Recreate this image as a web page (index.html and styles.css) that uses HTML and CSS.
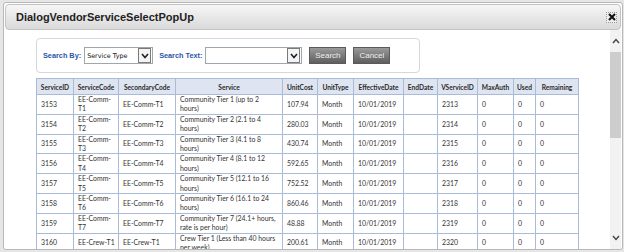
FILE: index.html
```html
<!DOCTYPE html>
<html lang="en">
<head>
    <meta charset="UTF-8">
    <title>DialogVendorServiceSelectPopUp</title>
    <link rel="stylesheet" href="styles.css">
</head>
<body>
    <div class="dialog">
        <div class="titlebar">
            <span class="title">DialogVendorServiceSelectPopUp</span>
            <span class="close">
                <svg width="8" height="8" viewBox="0 0 8 8"><path d="M1 1L7 7M7 1L1 7" stroke="#111" stroke-width="2"/></svg>
            </span>
        </div>
        <div class="content">
            <div class="main">
                <div class="search-panel">
                    <label class="lbl">Search By:</label>
                    <div class="select by">
                        <span class="sel-text">Service Type</span>
                        <span class="sel-arrow"><svg width="8" height="6" viewBox="0 0 8 6"><path d="M1 1L4 4.5L7 1" fill="none" stroke="#222" stroke-width="1.6"/></svg></span>
                    </div>
                    <label class="lbl text-lbl">Search Text:</label>
                    <div class="select txt">
                        <span class="sel-text"></span>
                        <span class="sel-arrow"><svg width="8" height="6" viewBox="0 0 8 6"><path d="M1 1L4 4.5L7 1" fill="none" stroke="#222" stroke-width="1.6"/></svg></span>
                    </div>
                    <button class="btn">Search</button>
                    <button class="btn">Cancel</button>
                </div>
                <table class="grid">
                    <colgroup>
                        <col style="width:37px"><col style="width:45px"><col style="width:57px"><col style="width:107px">
                        <col style="width:35px"><col style="width:36px"><col style="width:50px"><col style="width:34px">
                        <col style="width:40px"><col style="width:36px"><col style="width:22px"><col style="width:43px">
                    </colgroup>
                    <thead>
                        <tr>
                            <th>ServiceID</th><th>ServiceCode</th><th>SecondaryCode</th><th>Service</th>
                            <th>UnitCost</th><th>UnitType</th><th>EffectiveDate</th><th>EndDate</th>
                            <th>VServiceID</th><th>MaxAuth</th><th>Used</th><th>Remaining</th>
                        </tr>
                    </thead>
                    <tbody>
                        <tr><td>3153</td><td>EE-Comm-<br>T1</td><td>EE-Comm-T1</td><td>Community Tier 1 (up to 2<br>hours)</td><td>107.94</td><td>Month</td><td>10/01/2019</td><td></td><td>2313</td><td>0</td><td>0</td><td>0</td></tr>
                        <tr><td>3154</td><td>EE-Comm-<br>T2</td><td>EE-Comm-T2</td><td>Community Tier 2 (2.1 to 4<br>hours)</td><td>280.03</td><td>Month</td><td>10/01/2019</td><td></td><td>2314</td><td>0</td><td>0</td><td>0</td></tr>
                        <tr><td>3155</td><td>EE-Comm-<br>T3</td><td>EE-Comm-T3</td><td>Community Tier 3 (4.1 to 8<br>hours)</td><td>430.74</td><td>Month</td><td>10/01/2019</td><td></td><td>2315</td><td>0</td><td>0</td><td>0</td></tr>
                        <tr><td>3156</td><td>EE-Comm-<br>T4</td><td>EE-Comm-T4</td><td>Community Tier 4 (8.1 to 12<br>hours)</td><td>592.65</td><td>Month</td><td>10/01/2019</td><td></td><td>2316</td><td>0</td><td>0</td><td>0</td></tr>
                        <tr><td>3157</td><td>EE-Comm-<br>T5</td><td>EE-Comm-T5</td><td>Community Tier 5 (12.1 to 16<br>hours)</td><td>752.52</td><td>Month</td><td>10/01/2019</td><td></td><td>2317</td><td>0</td><td>0</td><td>0</td></tr>
                        <tr><td>3158</td><td>EE-Comm-<br>T6</td><td>EE-Comm-T6</td><td>Community Tier 6 (16.1 to 24<br>hours)</td><td>860.46</td><td>Month</td><td>10/01/2019</td><td></td><td>2318</td><td>0</td><td>0</td><td>0</td></tr>
                        <tr><td>3159</td><td>EE-Comm-<br>T7</td><td>EE-Comm-T7</td><td>Community Tier 7 (24.1+ hours,<br>rate is per hour)</td><td>48.88</td><td>Month</td><td>10/01/2019</td><td></td><td>2319</td><td>0</td><td>0</td><td>0</td></tr>
                        <tr><td>3160</td><td>EE-Crew-T1</td><td>EE-Crew-T1</td><td>Crew Tier 1 (Less than 40 hours<br>per week)</td><td>200.61</td><td>Month</td><td>10/01/2019</td><td></td><td>2320</td><td>0</td><td>0</td><td>0</td></tr>
                    </tbody>
                </table>
            </div>
            <div class="scrollbar">
                <span class="arrow"><svg width="8" height="6" viewBox="0 0 8 6"><path d="M1 5L4 1.5L7 5" fill="none" stroke="#444" stroke-width="1.4"/></svg></span>
                <div class="track"><div class="thumb"></div></div>
                <span class="arrow"><svg width="8" height="6" viewBox="0 0 8 6"><path d="M1 1L4 4.5L7 1" fill="none" stroke="#444" stroke-width="1.4"/></svg></span>
            </div>
        </div>
    </div>
</body>
</html>
```

FILE: styles.css
```css
html, body {
    margin: 0;
    padding: 0;
}
body {
    width: 624px;
    height: 252px;
    overflow: hidden;
    background: #e6e6e6;
    font-family: "Liberation Sans", Arial, sans-serif;
}
.dialog {
    margin: 2px 1px 0 3px;
    height: 246px;
    border: 1px solid #b8b8b8;
    border-radius: 3px;
    background: #fff;
    display: flex;
    flex-direction: column;
    overflow: hidden;
}
.titlebar {
    height: 24px;
    flex: none;
    margin: 1px 1px 0 1px;
    border: 1px solid #c4c4c4;
    border-radius: 4px;
    background: linear-gradient(to bottom, #f6f6f6, #dadada);
    display: flex;
    align-items: center;
    justify-content: space-between;
    padding: 0 3px 0 10px;
}
.title {
    font-size: 11px;
    font-weight: bold;
    color: #222;
}
.close {
    width: 9px;
    height: 9px;
    border: 1px dotted #999;
    display: flex;
    align-items: center;
    justify-content: center;
    background: #eee;
}
.content {
    flex: 1;
    display: flex;
    overflow: hidden;
}
.main {
    flex: 1;
    padding: 8px 0 0 32px;
    overflow: hidden;
}
.search-panel {
    width: 370px;
    height: 33px;
    border: 1px solid #d6d6dc;
    border-radius: 4px;
    display: flex;
    align-items: center;
    padding: 0 6px;
}
.lbl {
    font-size: 7.3px;
    font-weight: bold;
    color: #2a55a8;
    margin-right: 3px;
}
.text-lbl {
    margin-left: 6px;
}
.select {
    height: 15px;
    border: 1px solid #9ea6ae;
    display: flex;
    align-items: center;
    justify-content: space-between;
    background: #fff;
}
.select.by {
    width: 67px;
}
.select.txt {
    width: 95px;
}
.sel-text {
    font-family: "DejaVu Sans", sans-serif;
    font-size: 6.4px;
    color: #111;
    padding-left: 2px;
}
.sel-arrow {
    width: 11px;
    height: 13px;
    border: 1px solid #7a7a7a;
    margin-right: 1px;
    background: #f4f4f4;
    display: flex;
    align-items: center;
    justify-content: center;
}
.btn {
    height: 17px;
    width: 37px;
    margin-left: 7px;
    padding: 0;
    border: 1px solid #5a5a5a;
    background: linear-gradient(to bottom, #9a9a9a, #5e5e5e);
    color: #eee;
    font-family: "Liberation Sans", Arial, sans-serif;
    font-size: 8px;
}
.grid {
    margin-top: 5px;
    border-collapse: collapse;
    table-layout: fixed;
    width: 542px;
    font-family: Lato, "Open Sans", sans-serif;
    font-size: 6.9px;
    color: #333;
}
.grid th, .grid td {
    border: 1px solid #a9bbd9;
    padding: 0 2px;
    white-space: nowrap;
    overflow: hidden;
}
.grid th {
    height: 15px;
    background: #dee5f1;
    font-size: 6.6px;
    font-weight: bold;
    color: #2a2a2a;
    text-align: center;
}
.grid td {
    height: 18.3px;
    line-height: 9.4px;
    text-align: left;
    padding-left: 4px;
}
.scrollbar {
    width: 11px;
    flex: none;
    margin-right: 1px;
    display: flex;
    flex-direction: column;
    align-items: center;
    background: #f2f2f2;
}
.arrow {
    height: 22px;
    display: flex;
    align-items: center;
    justify-content: center;
}
.track {
    flex: 1;
    width: 100%;
}
.thumb {
    height: 86px;
    background: #cdcdcd;
}
```
